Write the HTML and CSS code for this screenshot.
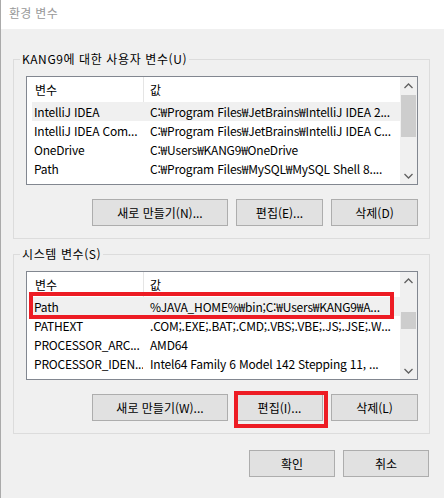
FILE: index.html
```html
<!DOCTYPE html>
<html lang="ko">
<head>
<meta charset="utf-8">
<title>환경 변수</title>
<link rel="stylesheet" href="styles.css">
</head>
<body>
<div class="window">
  <div class="titlebar">환경 변수</div>
  <div class="content">
    <div class="group">
      <div class="group-label">KANG9에 대한 사용자 변수(U)</div>
      <div class="list">
        <div class="list-main">
          <div class="list-header"><div class="col-name">변수</div><div class="col-val">값</div></div>
          <div class="row selected"><div class="c-name">IntelliJ IDEA</div><div class="c-val">C:₩Program Files₩JetBrains₩IntelliJ IDEA 2...</div></div>
          <div class="row"><div class="c-name">IntelliJ IDEA Com...</div><div class="c-val">C:₩Program Files₩JetBrains₩IntelliJ IDEA C...</div></div>
          <div class="row"><div class="c-name">OneDrive</div><div class="c-val">C:₩Users₩KANG9₩OneDrive</div></div>
          <div class="row"><div class="c-name">Path</div><div class="c-val">C:₩Program Files₩MySQL₩MySQL Shell 8....</div></div>
        </div>
        <div class="scrollbar">
          <div class="sb-btn"><svg width="17" height="17" viewBox="0 0 17 17"><polyline points="4.5,11 8.5,7 12.5,11" fill="none" stroke="#606060" stroke-width="1.3"/></svg></div>
          <div class="sb-track"><div class="sb-thumb" style="margin-top:1px;height:42px"></div></div>
          <div class="sb-btn"><svg width="17" height="17" viewBox="0 0 17 17"><polyline points="4.5,7 8.5,11 12.5,7" fill="none" stroke="#606060" stroke-width="1.3"/></svg></div>
        </div>
      </div>
      <div class="buttons">
        <div class="btn btn-wide">새로 만들기(N)...</div>
        <div class="btn">편집(E)...</div>
        <div class="btn">삭제(D)</div>
      </div>
    </div>

    <div class="group">
      <div class="group-label">시스템 변수(S)</div>
      <div class="list">
        <div class="list-main">
          <div class="list-header"><div class="col-name">변수</div><div class="col-val">값</div></div>
          <div class="row selected"><div class="c-name">Path</div><div class="c-val">%JAVA_HOME%₩bin;C:₩Users₩KANG9₩A...</div></div>
          <div class="row"><div class="c-name">PATHEXT</div><div class="c-val">.COM;.EXE;.BAT;.CMD;.VBS;.VBE;.JS;.JSE;.W...</div></div>
          <div class="row"><div class="c-name">PROCESSOR_ARC...</div><div class="c-val">AMD64</div></div>
          <div class="row"><div class="c-name">PROCESSOR_IDEN...</div><div class="c-val">Intel64 Family 6 Model 142 Stepping 11, ...</div></div>
        </div>
        <div class="scrollbar">
          <div class="sb-btn"><svg width="17" height="17" viewBox="0 0 17 17"><polyline points="4.5,11 8.5,7 12.5,11" fill="none" stroke="#606060" stroke-width="1.3"/></svg></div>
          <div class="sb-track"><div class="sb-thumb" style="margin-top:23px;height:17px"></div></div>
          <div class="sb-btn"><svg width="17" height="17" viewBox="0 0 17 17"><polyline points="4.5,7 8.5,11 12.5,7" fill="none" stroke="#606060" stroke-width="1.3"/></svg></div>
        </div>
        <div class="mark mark-row"></div>
      </div>
      <div class="buttons">
        <div class="btn btn-wide">새로 만들기(W)...</div>
        <div class="btn btn-marked">편집(I)...<div class="mark mark-btn"></div></div>
        <div class="btn">삭제(L)</div>
      </div>
    </div>

    <div class="footer">
      <div class="btn btn-footer">확인</div>
      <div class="btn btn-footer">취소</div>
    </div>
  </div>
</div>
</body>
</html>
```

FILE: styles.css
```css
html, body {
  margin: 0;
  padding: 0;
  background: #f0f0f0;
}

body {
  font-family: "Noto Sans CJK KR", "Noto Sans", sans-serif;
  font-size: 12px;
  color: #000;
}

.window {
  width: 444px;
  height: 498px;
  box-sizing: border-box;
  border-left: 1px solid #aaaaaa;
  background: #f0f0f0;
  overflow: hidden;
}

.titlebar {
  height: 29px;
  line-height: 26px;
  padding-left: 8px;
  background: #ffffff;
  color: #999999;
  letter-spacing: 0.3px;
}

.content {
  padding: 30px 14px 0 12px;
}

.group {
  border: 1px solid #dcdcdc;
  padding: 0 11px 12px 12px;
}

.group + .group {
  margin-top: 15px;
}

.group-label {
  width: fit-content;
  margin: -9px 0 0 -6px;
  padding: 0 2px;
  line-height: 16px;
  background: #f0f0f0;
  white-space: nowrap;
  letter-spacing: 0.6px;
}

.list {
  position: relative;
  display: flex;
  height: 109px;
  box-sizing: border-box;
  margin-top: 9px;
  border: 1px solid #828790;
  background: #ffffff;
}

.list-main {
  flex: 1;
  min-width: 0;
  overflow: hidden;
}

.list-header {
  display: flex;
  height: 25px;
  line-height: 25px;
}

.col-name {
  width: 117px;
  box-sizing: border-box;
  padding-left: 8px;
  border-right: 1px solid #e5e5e5;
}

.col-val {
  padding-left: 6px;
}

.row {
  display: flex;
  height: 19px;
  line-height: 19px;
  margin-left: 5px;
  white-space: nowrap;
  letter-spacing: -0.2px;
}

.row.selected {
  background: #f0f0f0;
}

.c-name {
  width: 111px;
  flex: none;
  box-sizing: border-box;
  padding-left: 2px;
  overflow: hidden;
}

.c-val {
  flex: 1;
  min-width: 0;
  padding-left: 7px;
  overflow: hidden;
}

.scrollbar {
  width: 17px;
  flex: none;
  display: flex;
  flex-direction: column;
  background: #f0f0f0;
}

.sb-btn {
  height: 17px;
  flex: none;
}

.sb-btn svg {
  display: block;
}

.sb-track {
  flex: 1;
}

.sb-thumb {
  margin-left: 1px;
  width: 15px;
  background: #cdcdcd;
}

.buttons {
  display: flex;
  justify-content: flex-end;
  gap: 8px;
  margin-top: 14px;
}

.btn {
  position: relative;
  display: flex;
  align-items: center;
  justify-content: center;
  width: 87px;
  height: 27px;
  box-sizing: border-box;
  border: 1px solid #adadad;
  background: #e1e1e1;
  white-space: nowrap;
}

.btn-wide {
  width: 136px;
}

.footer {
  display: flex;
  justify-content: flex-end;
  gap: 8px;
  margin-top: 16px;
  padding-right: 1px;
}

.btn-footer {
  width: 86px;
}

.mark {
  position: absolute;
  box-sizing: border-box;
  border: 4px solid #ed1c24;
  pointer-events: none;
}

.mark-row {
  left: 2px;
  top: 20px;
  width: 365px;
  height: 27px;
}

.mark-btn {
  left: -3px;
  top: -4px;
  width: 94px;
  height: 37px;
}
```
